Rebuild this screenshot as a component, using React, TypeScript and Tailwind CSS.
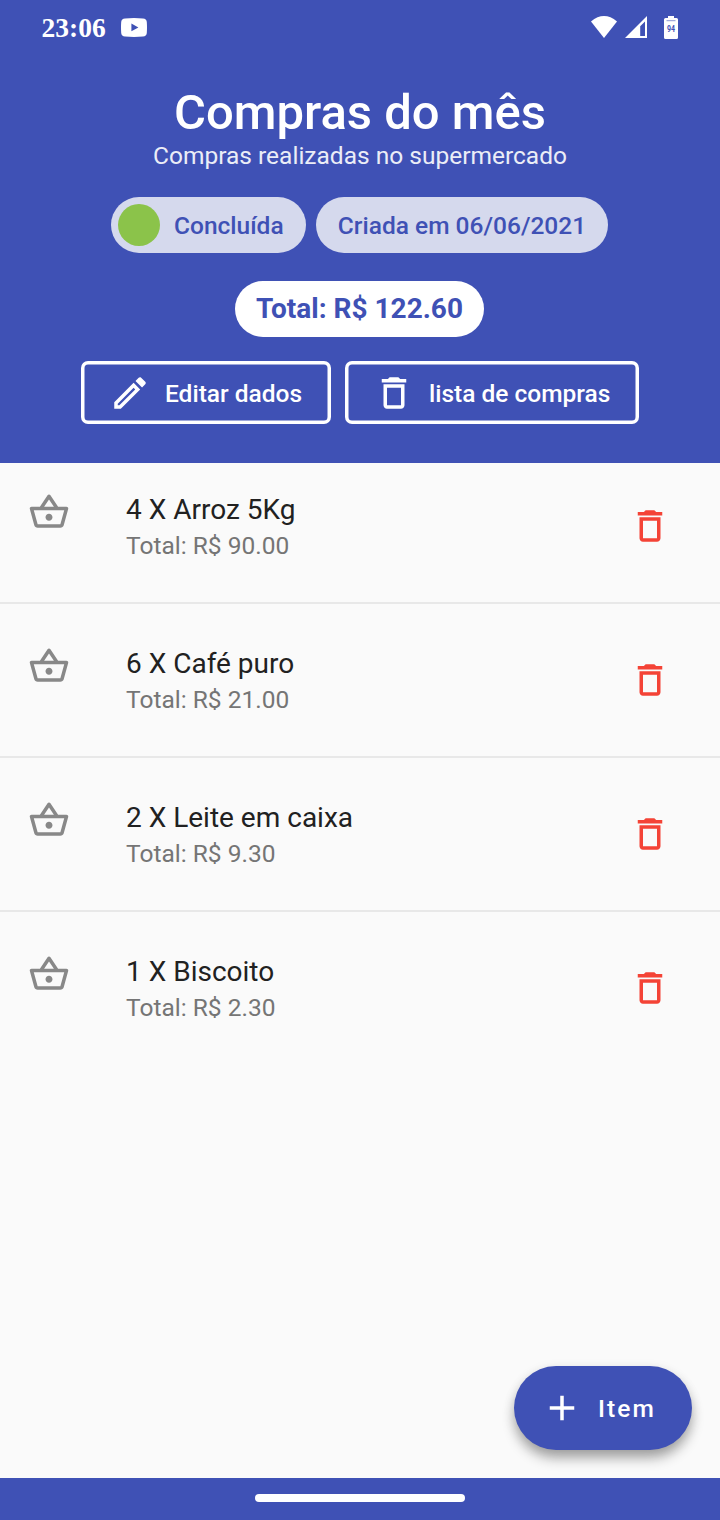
import type { ReactNode } from "react";

type IconProps = { d: string; className?: string };

const PENCIL =
  "M14.06 9.02l.92.92L5.92 19H5v-.92l9.06-9.06M17.66 3c-.25 0-.51.1-.7.29l-1.83 1.83 3.75 3.75 1.83-1.83c.39-.39.39-1.02 0-1.41l-2.34-2.34c-.2-.2-.45-.29-.71-.29zm-3.6 3.19L3 17.25V21h3.75L17.81 9.94l-3.75-3.75z";
const TRASH =
  "M6 19c0 1.1.9 2 2 2h8c1.1 0 2-.9 2-2V7H6v12zM8 9h8v10H8V9zm7.5-5l-1-1h-5l-1 1H5v2h14V4h-3.5z";
const BASKET =
  "M22 9h-4.79l-4.38-6.56c-.19-.28-.51-.42-.83-.42s-.64.14-.83.43L6.79 9H2c-.55 0-1 .45-1 1 0 .09.01.18.04.27l2.54 9.27c.23.84 1 1.46 1.92 1.46h13c.92 0 1.69-.62 1.93-1.46l2.54-9.27L23 10c0-.55-.45-1-1-1zM12 4.8L14.8 9H9.2L12 4.8zM18.5 19l-12.99.01L3.31 11H20.7l-2.2 8zM12 13c-1.1 0-2 .9-2 2s.9 2 2 2 2-.9 2-2-.9-2-2-2z";
const PLUS = "M19 13h-6v6h-2v-6H5v-2h6V5h2v6h6v2z";

function Icon({ d, className = "" }: IconProps) {
  return (
    <svg viewBox="0 0 24 24" fill="currentColor" className={`size-[42px] shrink-0 ${className}`}>
      <path d={d} />
    </svg>
  );
}

function StatusBar() {
  return (
    <div className="flex h-14 items-center pb-[2px] pl-[41.5px] pr-[42px] text-white">
      <span className="pt-[2px] font-['Liberation_Serif',serif] text-[27.5px] leading-none font-bold">23:06</span>
      <svg viewBox="0 0 26 19" className="ml-[15px] h-[19px] w-[26px]" fill="currentColor" fillRule="evenodd">
        <path d="M4 .4Q13-.3 22 .4Q25.5.6 25.8 4Q26.2 9.500 25.800 15Q25.500 18.300 22 18.600Q13 19.300 4 18.600Q.5 18.300.2 15Q-.2 9.500.2 4Q.5.600 4 .4ZM10.400 5.500V13.200L17.400 9.400Z" />
      </svg>
      <svg viewBox="0 0 26 22" className="ml-auto h-[22px] w-[26px]" fill="currentColor">
        <path d="M0 5.400Q13-5.200 26 5.400L13 22Z" />
      </svg>
      <svg viewBox="0 0 22 22" className="ml-2 h-[22px] w-[22px]" fill="currentColor" fillRule="evenodd">
        <path d="M22 0V22H0ZM20 5.500L15.200 10.300V20H20Z" />
      </svg>
      <svg viewBox="0 0 14 23" className="ml-[17px] h-[23px] w-[14px]">
        <path fill="white" d="M4 0h6v2h2.500Q14 2 14 3.500v18Q14 23 12.500 23h-11Q0 23 0 21.500v-18Q0 2 1.500 2H4Z" />
        <path d="M2.500 4.700h9" stroke="#8c97d3" strokeWidth="1" />
        <text x="7" y="15.800" textAnchor="middle" textLength="8" lengthAdjust="spacingAndGlyphs" fontFamily="Roboto, sans-serif" fontSize="8.500" fontWeight="700" fill="#3f51b5">
          94
        </text>
      </svg>
    </div>
  );
}

function OutlineButton({ icon, children, className }: { icon: string; children: ReactNode; className: string }) {
  return (
    <button className={`flex h-[63px] items-center rounded-[7px] pl-7 text-[24.5px] font-medium whitespace-nowrap text-white shadow-[inset_0_0_0_3.5px_#fff] ${className}`}>
      <Icon d={icon} />
      <span className="ml-[14px] pt-[3px]">{children}</span>
    </button>
  );
}

const items = [
  { name: "4 X Arroz 5Kg", total: "90.00" },
  { name: "6 X Café puro", total: "21.00" },
  { name: "2 X Leite em caixa", total: "9.30" },
  { name: "1 X Biscoito", total: "2.30" },
];

export default function App() {
  return (
    <div className="flex h-[1520px] w-[720px] flex-col bg-[#fafafa] font-['Roboto',sans-serif]">
      <header className="flex h-[462.500px] shrink-0 flex-col bg-[#3f51b5]">
        <StatusBar />
        <div className="flex flex-col items-center pt-7">
          <h1 className="text-[49px] leading-[58px] font-medium text-white">Compras do mês</h1>
          <p className="-mt-[2px] text-[24.500px] leading-[32px] text-[#ebedf7]">
            Compras realizadas no supermercado
          </p>
        </div>
        <div className="mt-[24.500px] flex justify-center gap-[10.500px] pr-px text-[24.500px] font-medium text-[#3f51b5]">
          <div className="flex h-14 w-[194.500px] items-center rounded-full bg-[#d5d9ed] pl-[7px]">
            <span className="size-[42px] rounded-full bg-[#8bc34a]" />
            <span className="ml-[14px] pt-[3px]">Concluída</span>
          </div>
          <div className="flex h-14 w-[292px] items-center justify-center rounded-full bg-[#d5d9ed] pt-[3px]">
            Criada em 06/06/2021
          </div>
        </div>
        <div className="mt-7 flex justify-center pr-px">
          <div className="flex h-14 w-[249px] items-center justify-center rounded-full bg-white text-[28px] font-bold text-[#3f51b5]">
            Total: R$ 122.60
          </div>
        </div>
        <div className="mt-[24.500px] flex justify-center gap-[14px]">
          <OutlineButton icon={PENCIL} className="w-[250px]">Editar dados</OutlineButton>
          <OutlineButton icon={TRASH} className="w-[294px]">lista de compras</OutlineButton>
        </div>
      </header>

      <main className="flex-1">
        <ul className="-mt-[12.500px]">
          {items.map((item) => (
            <li key={item.name} className="flex h-[154px] items-start border-b-2 border-[#e8e8e8] pl-7 pr-[49px] last:border-transparent">
              <Icon d={BASKET} className="mt-[41px] text-[#888888]" />
              <div className="ml-14 flex flex-1 flex-col pt-[42px]">
                <span className="text-[28px] leading-[36px] text-[#212121]">{item.name}</span>
                <span className="text-[24.500px] leading-[36px] text-[#757575]">Total: R$ {item.total}</span>
              </div>
              <Icon d={TRASH} className="mt-[55px] text-[#f44336]" />
            </li>
          ))}
        </ul>
      </main>

      <div className="flex h-28 shrink-0 justify-end pr-7">
        <button className="flex h-[84px] w-[178.500px] items-center rounded-full bg-[#3f51b5] pl-[27.500px] text-[24.500px] font-medium tracking-[2.100px] text-white shadow-[0_9px_13px_-1px_rgba(0,0,0,0.32),0_3px_12px_rgba(0,0,0,0.1)]">
          <Icon d={PLUS} />
          <span className="ml-[15px] pt-[2px]">Item</span>
        </button>
      </div>
      <footer className="relative flex h-[42px] shrink-0 items-center justify-center bg-[#3f51b5]">
        <span className="-mt-[2px] h-2 w-[210px] rounded-full bg-white" />
      </footer>
    </div>
  );
}
